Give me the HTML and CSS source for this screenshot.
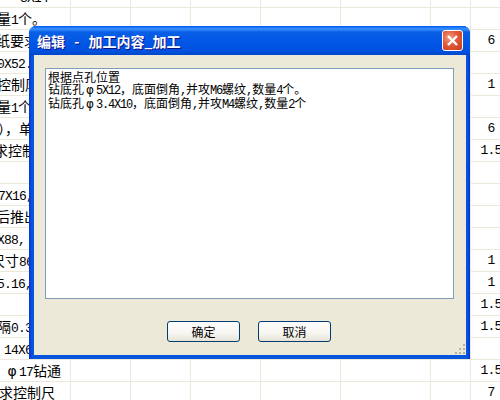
FILE: index.html
```html
<!DOCTYPE html>
<html lang="zh-CN">
<head>
  <meta charset="UTF-8">
  <title>编辑 - 加工内容_加工</title>
  <link rel="stylesheet" href="styles.css">
</head>
<body>
  <!-- Spreadsheet behind the dialog -->
  <div class="sheet">
    <div class="row"><span class="cell first push-20"><span class="en">3X14</span></span><i></i><i></i><i></i><i></i><i></i><i></i><span class="cell num"></span></div>
    <div class="row"><span class="cell first shift-3">量<span class="en">1</span>个。</span><i></i><i></i><i></i><i></i><i></i><i></i><span class="cell num"></span></div>
    <div class="row"><span class="cell first shift-4">纸要求</span><i></i><i></i><i></i><i></i><i></i><i></i><span class="cell num">6</span></div>
    <div class="row"><span class="cell first shift-3"><span class="en">0X52.</span></span><i></i><i></i><i></i><i></i><i></i><i></i><span class="cell num"></span></div>
    <div class="row"><span class="cell first shift-3">控制厚</span><i></i><i></i><i></i><i></i><i></i><i></i><span class="cell num">1</span></div>
    <div class="row"><span class="cell first shift-3">量<span class="en">1</span>个。</span><i></i><i></i><i></i><i></i><i></i><i></i><span class="cell num"></span></div>
    <div class="row"><span class="cell first shift-2">），单</span><i></i><i></i><i></i><i></i><i></i><i></i><span class="cell num">6</span></div>
    <div class="row"><span class="cell first shift-6">求控制</span><i></i><i></i><i></i><i></i><i></i><i></i><span class="cell num">1.5</span></div>
    <div class="row"><span class="cell first"></span><i></i><i></i><i></i><i></i><i></i><i></i><span class="cell num"></span></div>
    <div class="row"><span class="cell first shift-2"><span class="en">7X16,</span></span><i></i><i></i><i></i><i></i><i></i><i></i><span class="cell num"></span></div>
    <div class="row"><span class="cell first shift-4">后推出</span><i></i><i></i><i></i><i></i><i></i><i></i><span class="cell num"></span></div>
    <div class="row"><span class="cell first shift-3"><span class="en">X88,</span></span><i></i><i></i><i></i><i></i><i></i><i></i><span class="cell num"></span></div>
    <div class="row"><span class="cell first shift-9">尺寸<span class="en">86</span></span><i></i><i></i><i></i><i></i><i></i><i></i><span class="cell num">1</span></div>
    <div class="row"><span class="cell first shift-3"><span class="en">5.16,</span></span><i></i><i></i><i></i><i></i><i></i><i></i><span class="cell num">1</span></div>
    <div class="row"><span class="cell first"></span><i></i><i></i><i></i><i></i><i></i><i></i><span class="cell num">1.5</span></div>
    <div class="row"><span class="cell first shift-3">隔<span class="en">0.3</span>孔</span><i></i><i></i><i></i><i></i><i></i><i></i><span class="cell num">1.5</span></div>
    <div class="row"><span class="cell first push-4"><span class="en">14X6</span></span><i></i><i></i><i></i><i></i><i></i><i></i><span class="cell num"></span></div>
    <div class="row"><span class="cell first push-5"><span class="phi">φ</span><span class="en">17</span>钻通</span><i></i><i></i><i></i><i></i><i></i><i></i><span class="cell num">1.5</span></div>
    <div class="row"><span class="cell first shift-1">求控制尺</span><i></i><i></i><i></i><i></i><i></i><i></i><span class="cell num">7</span></div>
  </div>

  <!-- XP style dialog -->
  <div class="window">
    <div class="titlebar">
      <span class="title">编辑 - 加工内容_加工</span>
      <span class="close">
        <svg width="13" height="13" viewBox="0 0 13 13"><path d="M2 2 L11 11 M11 2 L2 11" stroke="#fff" stroke-width="2.4" fill="none"/></svg>
      </span>
    </div>
    <div class="client">
      <div class="memo">
        <div>根据点孔位置</div>
        <div>钻底孔<span class="wide">φ</span><span class="mono">5X12</span>，底面倒角<span class="mono">,</span>并攻<span class="mono">M6</span>螺纹<span class="mono">,</span>数量<span class="mono">4</span>个。</div>
        <div>钻底孔<span class="wide">φ</span><span class="mono">3.4X10</span>，底面倒角<span class="mono">,</span>并攻<span class="mono">M4</span>螺纹<span class="mono">,</span>数量<span class="mono">2</span>个</div>
      </div>
      <div class="buttons">
        <button class="btn">确定</button>
        <button class="btn">取消</button>
      </div>
      <svg class="grip" width="12" height="12" viewBox="0 0 12 12" fill="#b4b1a3">
        <rect x="9" y="1" width="2" height="2"/>
        <rect x="5" y="5" width="2" height="2"/><rect x="9" y="5" width="2" height="2"/>
        <rect x="1" y="9" width="2" height="2"/><rect x="5" y="9" width="2" height="2"/><rect x="9" y="9" width="2" height="2"/>
      </svg>
    </div>
  </div>
</body>
</html>
```

FILE: styles.css
```css
html, body {
  margin: 0;
  padding: 0;
  height: 400px;
  overflow: hidden;
  background-color: #fff;
}

body {
  position: relative;
  font-family: "Noto Sans CJK SC", sans-serif;
  color: #000;
}

/* sheet */
.sheet {
  margin-top: -14px;
  font-size: 14px;
}

.row {
  display: grid;
  grid-template-columns: 71px 60px 60px 70px 80px 90px 40px 29px;
  height: 22px;
  box-sizing: border-box;
  border-bottom: 1px solid #ece9d8;
}

.row i {
  display: block;
  border-right: 1px solid #ece9d8;
}

.row i:nth-child(7) {
  grid-column: 7;
}

.cell {
  display: block;
  line-height: 20px;
  white-space: nowrap;
  overflow: hidden;
}

.first {
  border-right: 1px solid #ece9d8;
}

.shift-1 { text-indent: -1px; }
.shift-2 { text-indent: -2px; }
.shift-3 { text-indent: -3px; }
.shift-4 { text-indent: -4px; }
.shift-6 { text-indent: -6px; }
.shift-9 { text-indent: -9px; }
.push-4 { text-indent: 4px; }
.push-5 { text-indent: 5px; }
.push-20 { text-indent: 20px; }

.num {
  width: 40px;
  text-align: center;
  line-height: 21px;
  font-family: "Liberation Mono", monospace;
  font-size: 13px;
  letter-spacing: -0.8px;
}

.en {
  font-family: "Liberation Mono", monospace;
  font-size: 13px;
  letter-spacing: -0.8px;
}

.phi {
  display: inline-block;
  width: 14px;
  text-indent: 0;
  text-align: center;
  font-family: "DejaVu Sans", sans-serif;
}

/* dialog */
.window {
  position: absolute;
  left: 29px;
  top: 26px;
  width: 441px;
  height: 333px;
  box-sizing: border-box;
  display: flex;
  flex-direction: column;
  border-radius: 7px 7px 0 0;
  background: linear-gradient(to right, #0831d9 0, #0855dd 3px, #0855dd calc(100% - 3px), #0831d9 100%);
  padding: 0 4px 4px 5px;
}

.titlebar {
  margin: 0 -4px 0 -5px;
  height: 29px;
  padding: 0 7px 0 8px;
  display: flex;
  align-items: center;
  justify-content: space-between;
  border-radius: 7px 7px 0 0;
  background: linear-gradient(to bottom, #0058ee 0, #3a93ff 3px, #0a5fe6 6px, #0055e5 18px, #0050dc 26px, #0046c8 100%);
}

.title {
  color: #fff;
  font-size: 14px;
  font-weight: bold;
  word-spacing: 6px;
  white-space: nowrap;
  text-shadow: 1px 1px 0 #0f1089;
}

.close {
  width: 21px;
  height: 21px;
  box-sizing: border-box;
  border: 1px solid #fff;
  border-radius: 3px;
  background: radial-gradient(circle at 35% 35%, #f0a088 0, #e2593a 45%, #c63a18 100%);
  display: flex;
  align-items: center;
  justify-content: center;
}

.client {
  flex: 1;
  position: relative;
  background-color: #ece9d8;
  padding: 13px 12px 13px 11px;
  display: flex;
  flex-direction: column;
}

.memo {
  height: 231px;
  box-sizing: border-box;
  background-color: #fff;
  border: 1px solid #7f9db9;
  padding: 2px;
  font-size: 12px;
  line-height: 12px;
  white-space: nowrap;
}

.mono {
  font-family: "Liberation Mono", monospace;
  letter-spacing: -1.2px;
}

.wide {
  display: inline-block;
  width: 12px;
  text-align: center;
  font-family: "DejaVu Sans", sans-serif;
}

.buttons {
  margin-top: 22px;
  padding-left: 122px;
  display: flex;
  gap: 18px;
}

.btn {
  width: 73px;
  height: 21px;
  padding: 0;
  box-sizing: border-box;
  font-family: "Noto Sans CJK SC", sans-serif;
  font-size: 12px;
  line-height: 17px;
  color: #000;
  border: 1px solid #003c74;
  border-radius: 3px;
  background: linear-gradient(to bottom, #fff 0, #f6f5f0 60%, #e6e3d6 100%);
}

.grip {
  position: absolute;
  right: 0;
  bottom: 0;
}
```
